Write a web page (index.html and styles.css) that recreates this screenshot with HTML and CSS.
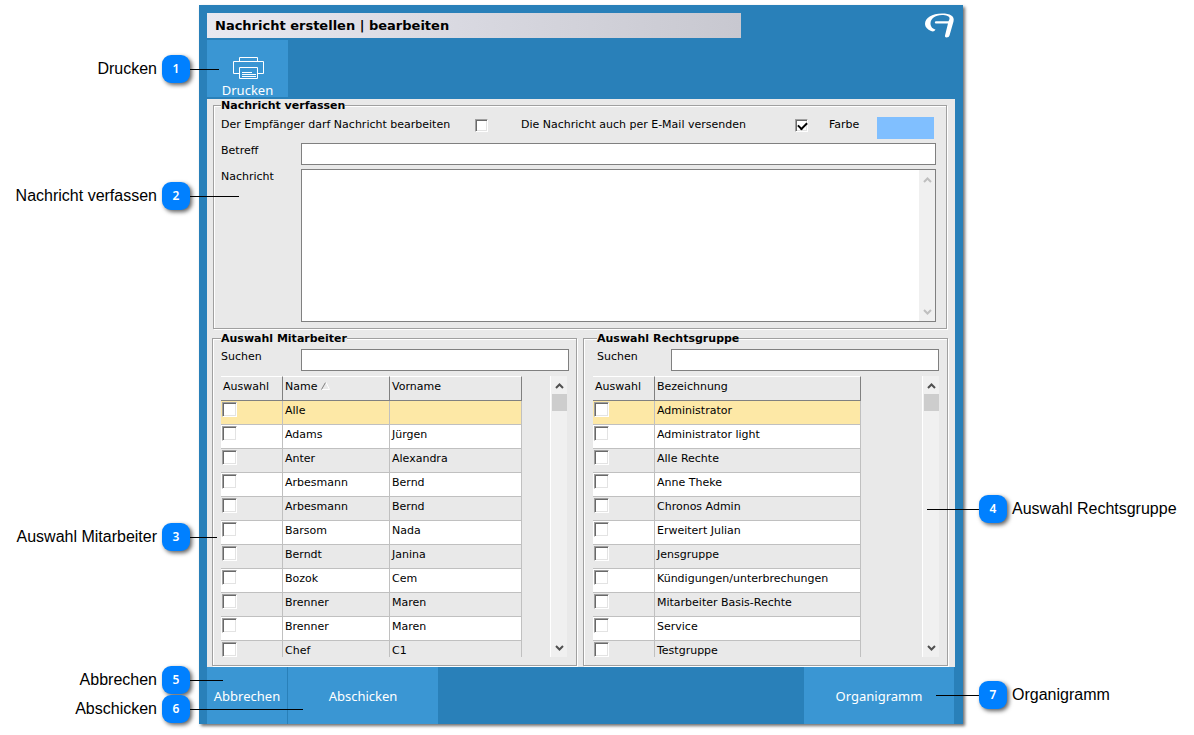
FILE: index.html
```
<!DOCTYPE html>
<html lang="de">
<head>
    <meta charset="UTF-8">
    <meta name="viewport" content="width=device-width, initial-scale=1.0">
    <title>Nachricht erstellen | bearbeiten</title>
    <link rel="stylesheet" href="styles.css">
</head>
<body>
    <div class="stage">
        <main class="window">
            <header class="window-header">
                <h1 class="window-title">Nachricht erstellen | bearbeiten</h1>
                <svg class="logo" viewBox="0 0 30 26" aria-hidden="true">
                    <path d="M10.500 16.500C9.500 18.500 8 19 6 18C2.500 16.500 0 14 0 11C0 5 7 0.500 17 0.500C25 0.500 30 3 28.500 8.500L24.500 22.500Q24 24.500 21.500 24.500Q19.500 24.500 20 22.500L23 10.500H10.500Q9 9.500 10.500 8.200H23.500L24.500 6C25 3 21 2 17 2C10 2 5.500 6 5.500 10.500C5.500 14 8 16 10.500 16.500Z" fill="#fff"/>
                </svg>
            </header>

            <div class="toolbar">
                <button type="button" class="tool-button">
                    <svg width="32" height="24" viewBox="0 0 32 24" fill="none" stroke="#fff" aria-hidden="true">
                        <path d="M7.500 5.500V1.500H25.500V5.500"/>
                        <path d="M7 17.500H1.500V5.500H31.500V17.500H26"/>
                        <path d="M7.500 11.500H25.500V22.500H7.500Z"/>
                        <path d="M10 16.500H20M10 18.500H24M10 20.500H24"/>
                    </svg>
                    Drucken
                </button>
            </div>

            <div class="panel">
                <fieldset class="group compose">
                    <legend>Nachricht verfassen</legend>
                    <div class="options">
                        <label for="allow-edit">Der Empfänger darf Nachricht bearbeiten</label>
                        <input type="checkbox" class="check" id="allow-edit">
                        <label for="send-mail">Die Nachricht auch per E-Mail versenden</label>
                        <input type="checkbox" class="check" id="send-mail" checked>
                        <label for="color">Farbe</label>
                        <button type="button" class="color-swatch" id="color" aria-label="Farbe"></button>
                    </div>
                    <div class="field">
                        <label for="subject">Betreff</label>
                        <input type="text" class="text-input" id="subject">
                    </div>
                    <div class="field">
                        <label for="message">Nachricht</label>
                        <div class="message-box">
                            <textarea id="message"></textarea>
                            <div class="scrollbar disabled">
                                <svg width="9" height="6" viewBox="0 0 9 6"><path d="M1 5L4.500 1.500L8 5"/></svg>
                                <svg width="9" height="6" viewBox="0 0 9 6"><path d="M1 1L4.500 4.500L8 1"/></svg>
                            </div>
                        </div>
                    </div>
                </fieldset>

                <div class="lists">
                    <fieldset class="group employees">
                        <legend>Auswahl Mitarbeiter</legend>
                        <div class="field">
                            <label for="search-employee">Suchen</label>
                            <input type="text" class="text-input" id="search-employee">
                        </div>
                        <div class="list">
                            <table>
                                <thead>
                                    <tr>
                                        <th class="col-check">Auswahl</th>
                                        <th class="col-name">Name <svg width="9" height="8" viewBox="0 0 9 8"><path d="M0.500 7.500L4.500 0.500" stroke="#808080"/><path d="M5 0.500L8.500 7.500H1" stroke="#fff" fill="none"/></svg></th>
                                        <th>Vorname</th>
                                    </tr>
                                </thead>
                                <tbody>
                                    <tr class="selected"><td><input type="checkbox" class="check" aria-label="Alle"></td><td>Alle</td><td></td></tr>
                                    <tr><td><input type="checkbox" class="check" aria-label="Adams"></td><td>Adams</td><td>Jürgen</td></tr>
                                    <tr><td><input type="checkbox" class="check" aria-label="Anter"></td><td>Anter</td><td>Alexandra</td></tr>
                                    <tr><td><input type="checkbox" class="check" aria-label="Arbesmann"></td><td>Arbesmann</td><td>Bernd</td></tr>
                                    <tr><td><input type="checkbox" class="check" aria-label="Arbesmann"></td><td>Arbesmann</td><td>Bernd</td></tr>
                                    <tr><td><input type="checkbox" class="check" aria-label="Barsom"></td><td>Barsom</td><td>Nada</td></tr>
                                    <tr><td><input type="checkbox" class="check" aria-label="Berndt"></td><td>Berndt</td><td>Janina</td></tr>
                                    <tr><td><input type="checkbox" class="check" aria-label="Bozok"></td><td>Bozok</td><td>Cem</td></tr>
                                    <tr><td><input type="checkbox" class="check" aria-label="Brenner"></td><td>Brenner</td><td>Maren</td></tr>
                                    <tr><td><input type="checkbox" class="check" aria-label="Brenner"></td><td>Brenner</td><td>Maren</td></tr>
                                    <tr><td><input type="checkbox" class="check" aria-label="Chef"></td><td>Chef</td><td>C1</td></tr>
                                </tbody>
                            </table>
                            <div class="scrollbar">
                                <svg width="9" height="6" viewBox="0 0 9 6"><path d="M1 5L4.500 1.500L8 5"/></svg>
                                <div class="thumb"></div>
                                <svg width="9" height="6" viewBox="0 0 9 6"><path d="M1 1L4.500 4.500L8 1"/></svg>
                            </div>
                        </div>
                    </fieldset>

                    <fieldset class="group rights">
                        <legend>Auswahl Rechtsgruppe</legend>
                        <div class="field">
                            <label for="search-group">Suchen</label>
                            <input type="text" class="text-input" id="search-group">
                        </div>
                        <div class="list">
                            <table>
                                <thead>
                                    <tr>
                                        <th class="col-check">Auswahl</th>
                                        <th>Bezeichnung</th>
                                    </tr>
                                </thead>
                                <tbody>
                                    <tr class="selected"><td><input type="checkbox" class="check" aria-label="Administrator"></td><td>Administrator</td></tr>
                                    <tr><td><input type="checkbox" class="check" aria-label="Administrator light"></td><td>Administrator light</td></tr>
                                    <tr><td><input type="checkbox" class="check" aria-label="Alle Rechte"></td><td>Alle Rechte</td></tr>
                                    <tr><td><input type="checkbox" class="check" aria-label="Anne Theke"></td><td>Anne Theke</td></tr>
                                    <tr><td><input type="checkbox" class="check" aria-label="Chronos Admin"></td><td>Chronos Admin</td></tr>
                                    <tr><td><input type="checkbox" class="check" aria-label="Erweitert Julian"></td><td>Erweitert Julian</td></tr>
                                    <tr><td><input type="checkbox" class="check" aria-label="Jensgruppe"></td><td>Jensgruppe</td></tr>
                                    <tr><td><input type="checkbox" class="check" aria-label="Kündigungen/unterbrechungen"></td><td>Kündigungen/unterbrechungen</td></tr>
                                    <tr><td><input type="checkbox" class="check" aria-label="Mitarbeiter Basis-Rechte"></td><td>Mitarbeiter Basis-Rechte</td></tr>
                                    <tr><td><input type="checkbox" class="check" aria-label="Service"></td><td>Service</td></tr>
                                    <tr><td><input type="checkbox" class="check" aria-label="Testgruppe"></td><td>Testgruppe</td></tr>
                                </tbody>
                            </table>
                            <div class="scrollbar">
                                <svg width="9" height="6" viewBox="0 0 9 6"><path d="M1 5L4.500 1.500L8 5"/></svg>
                                <div class="thumb"></div>
                                <svg width="9" height="6" viewBox="0 0 9 6"><path d="M1 1L4.500 4.500L8 1"/></svg>
                            </div>
                        </div>
                    </fieldset>
                </div>
            </div>

            <footer class="actions">
                <button type="button" class="action cancel">Abbrechen</button>
                <button type="button" class="action">Abschicken</button>
                <button type="button" class="action chart">Organigramm</button>
            </footer>
        </main>

        <!-- Callouts around the window -->
        <div class="callout left c1"><span class="text">Drucken</span><span class="badge">1</span><span class="line"></span></div>
        <div class="callout left c2"><span class="text">Nachricht verfassen</span><span class="badge">2</span><span class="line"></span></div>
        <div class="callout left c3"><span class="text">Auswahl Mitarbeiter</span><span class="badge">3</span><span class="line"></span></div>
        <div class="callout right c4"><span class="line"></span><span class="badge">4</span><span class="text">Auswahl Rechtsgruppe</span></div>
        <div class="callout left c5"><span class="text">Abbrechen</span><span class="badge">5</span><span class="line"></span></div>
        <div class="callout left c6"><span class="text">Abschicken</span><span class="badge">6</span><span class="line"></span></div>
        <div class="callout right c7"><span class="line"></span><span class="badge">7</span><span class="text">Organigramm</span></div>
    </div>
</body>
</html>
```
FILE: styles.css
```
* {
    box-sizing: border-box;
    margin: 0;
    padding: 0;
}

body {
    background-color: #fff;
    color: #000;
    font-family: Verdana, "DejaVu Sans", sans-serif;
    font-size: 11px;
    line-height: 16px;
}

button,
input,
textarea {
    font: inherit;
    border: none;
    border-radius: 0;
}

.stage {
    position: relative;
    padding: 5px 231px 11px 199px;
}

/* Window */
.window {
    background-color: #2980b9;
    padding: 8px 8px 0;
    box-shadow: 2px 2px 3px #707070;
}

.window-header {
    display: flex;
    justify-content: space-between;
    height: 27px;
}

.window-title {
    width: 534px;
    height: 25px;
    padding-left: 8px;
    font-size: 13px;
    line-height: 25px;
    background: linear-gradient(to right, #e8e8f0, #c8c8d0);
}

.logo {
    width: 30px;
    height: 26px;
}

.toolbar {
    display: flex;
    height: 59px;
}

.tool-button {
    display: flex;
    flex-direction: column;
    align-items: center;
    gap: 3px;
    width: 81px;
    height: 57px;
    padding-top: 16px;
    color: #fff;
    font-family: "Noto Sans", sans-serif;
    font-size: 13px;
    line-height: 14px;
    background-color: #3a96d3;
    cursor: pointer;
}

/* Content panel */
.panel {
    padding: 0 7px 1px 5px;
    background-color: #e9e9e9;
}

.group {
    min-width: 0;
    border: 1px solid #a0a0a0;
    box-shadow: 1px 1px 0 #fff, inset 1px 1px 0 #fff;
}

.group legend {
    font-weight: bold;
    line-height: 13px;
    background-color: #e9e9e9;
}

.compose {
    display: flex;
    flex-direction: column;
    gap: 4px;
    margin: 0 1px 3px;
    padding: 5px 10px 6px 7px;
}

.options {
    display: grid;
    grid-template-columns: 254px 46px 1fr 34px 48px 57px;
    padding-right: 2px;
}

.options .check {
    width: 13px;
    height: 13px;
    margin-top: 2px;
}

.color-swatch {
    height: 22px;
    background-color: #80bfff;
}

.field {
    display: flex;
}

.field label {
    width: 80px;
}

.text-input {
    flex: 1;
    min-width: 0;
    height: 22px;
    padding: 0 4px;
    background-color: #fff;
    border: 1px solid #808080;
}

.message-box {
    display: flex;
    flex: 1;
    height: 153px;
    background-color: #fff;
    border: 1px solid #808080;
}

.message-box textarea {
    flex: 1;
    padding: 4px;
    resize: none;
    outline: none;
}

/* Checkbox with sunken edge */
.check {
    display: block;
    width: 15px;
    height: 15px;
    appearance: none;
    background-color: #fff;
    border: 1px solid;
    border-color: #a0a0a0 #fff #fff #a0a0a0;
    box-shadow: inset 1px 1px 0 #696969, inset -1px -1px 0 #e3e3e3;
}

.check:checked::before {
    content: "";
    display: block;
    width: 7px;
    height: 4px;
    margin: 2px;
    border: solid #000;
    border-width: 0 0 2px 2px;
    transform: rotate(-45deg);
}

/* Scrollbars */
.scrollbar {
    display: flex;
    flex-direction: column;
    align-items: center;
    width: 17px;
    padding: 7px 0 6px;
    background-color: #f0f0f0;
    border-left: 1px solid #fff;
}

.scrollbar svg {
    fill: none;
    stroke: #505050;
    stroke-width: 2;
}

.scrollbar svg:last-child {
    margin-top: auto;
}

.scrollbar.disabled svg {
    stroke: #bfbfbf;
}

.thumb {
    width: 15px;
    height: 17px;
    margin-top: 5px;
    background-color: #cdcdcd;
}

/* Selection lists */
.lists {
    display: grid;
    grid-template-columns: 1fr 1fr;
    gap: 6px;
}

.employees {
    padding: 4px 7px 8px 8px;
}

.rights {
    padding: 4px 8px 8px 9px;
}

.rights legend {
    margin-left: 4px;
}

.rights .field label {
    width: 78px;
    padding-left: 4px;
}

.list {
    display: flex;
    gap: 28px;
    height: 281px;
    margin-top: 5px;
    overflow: hidden;
}

.employees .list {
    padding-right: 2px;
}

.rights .list {
    gap: 61px;
}

.list table {
    flex: 1;
    height: 289px;
    table-layout: fixed;
    border-collapse: separate;
    border-spacing: 0;
}

.list th {
    height: 25px;
    padding: 2px;
    text-align: left;
    vertical-align: top;
    font-weight: normal;
    border: solid #808080;
    border-width: 1px 1px 1px 0;
    border-top-color: #fff;
}

.list td {
    height: 24px;
    padding: 2px;
    vertical-align: top;
    border: solid #c0c0c0;
    border-width: 0 1px 1px 0;
}

.list td:first-child {
    padding: 1px;
}

.col-check {
    width: 62px;
}

.col-name {
    width: 107px;
}

.list tbody tr:nth-child(even) {
    background-color: #fff;
}

.list tbody .selected {
    background-color: #fde8a6;
}

/* Footer buttons */
.actions {
    display: flex;
    height: 57px;
}

.action {
    width: 150px;
    color: #fff;
    font-family: "Noto Sans", sans-serif;
    font-size: 13px;
    background-color: #3a96d3;
    cursor: pointer;
}

.cancel {
    width: 81px;
    border-right: 1px solid #2980b9;
}

.chart {
    margin-left: auto;
    margin-right: 1px;
}

/* Callouts */
.callout {
    position: absolute;
    display: flex;
    align-items: center;
    height: 28px;
    font-family: "Liberation Sans", Arial, sans-serif;
    font-size: 16px;
    line-height: 18px;
    pointer-events: none;
}

.callout.left {
    left: 0;
}

.callout.right {
    right: 0;
}

.left .text {
    width: 157px;
    margin-right: 5px;
    text-align: right;
}

.right .text {
    width: 182px;
    margin-left: 5px;
}

.badge {
    width: 28px;
    height: 28px;
    color: #fff;
    font-family: "Noto Sans", sans-serif;
    font-size: 12px;
    font-weight: 600;
    line-height: 28px;
    text-align: center;
    background-color: #0080ff;
    border-radius: 9px;
    box-shadow: 2px 2px 4px #606060;
}

.line {
    height: 1px;
    background-color: #000;
}

.c1 { top: 55px; }
.c2 { top: 182px; }
.c3 { top: 523px; }
.c4 { top: 495px; }
.c5 { top: 666px; }
.c6 { top: 695px; }
.c7 { top: 681px; }

.c1 .line { width: 29px; }
.c2 .line { width: 49px; }
.c3 .line { width: 27px; }
.c4 .line { width: 52px; }
.c5 .line { width: 33px; }
.c6 .line { width: 113px; }
.c7 .line { width: 43px; }
```
